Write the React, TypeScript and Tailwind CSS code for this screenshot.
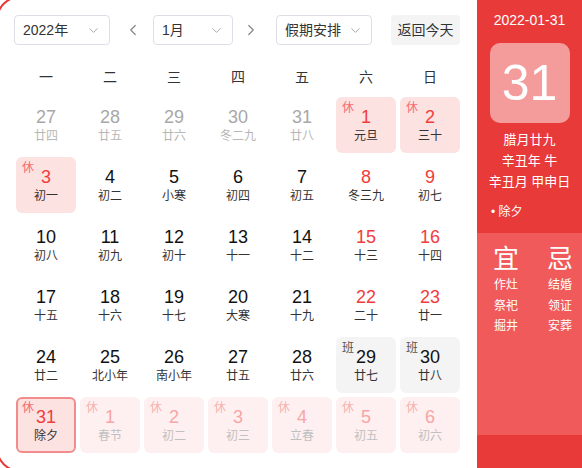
import { ChevronDown, ChevronLeft, ChevronRight } from "lucide-react";

type Day = {
  n: number;
  lunar: string;
  kind?: "prev" | "next";
  tag?: "休" | "班";
  red?: boolean;
  selected?: boolean;
};

const weeks: Day[][] = [
  [
    { n: 27, lunar: "廿四", kind: "prev" },
    { n: 28, lunar: "廿五", kind: "prev" },
    { n: 29, lunar: "廿六", kind: "prev" },
    { n: 30, lunar: "冬二九", kind: "prev" },
    { n: 31, lunar: "廿八", kind: "prev" },
    { n: 1, lunar: "元旦", tag: "休", red: true },
    { n: 2, lunar: "三十", tag: "休", red: true },
  ],
  [
    { n: 3, lunar: "初一", tag: "休", red: true },
    { n: 4, lunar: "初二" },
    { n: 5, lunar: "小寒" },
    { n: 6, lunar: "初四" },
    { n: 7, lunar: "初五" },
    { n: 8, lunar: "冬三九", red: true },
    { n: 9, lunar: "初七", red: true },
  ],
  [
    { n: 10, lunar: "初八" },
    { n: 11, lunar: "初九" },
    { n: 12, lunar: "初十" },
    { n: 13, lunar: "十一" },
    { n: 14, lunar: "十二" },
    { n: 15, lunar: "十三", red: true },
    { n: 16, lunar: "十四", red: true },
  ],
  [
    { n: 17, lunar: "十五" },
    { n: 18, lunar: "十六" },
    { n: 19, lunar: "十七" },
    { n: 20, lunar: "大寒" },
    { n: 21, lunar: "十九" },
    { n: 22, lunar: "二十", red: true },
    { n: 23, lunar: "廿一", red: true },
  ],
  [
    { n: 24, lunar: "廿二" },
    { n: 25, lunar: "北小年" },
    { n: 26, lunar: "南小年" },
    { n: 27, lunar: "廿五" },
    { n: 28, lunar: "廿六" },
    { n: 29, lunar: "廿七", tag: "班" },
    { n: 30, lunar: "廿八", tag: "班" },
  ],
  [
    { n: 31, lunar: "除夕", tag: "休", red: true, selected: true },
    { n: 1, lunar: "春节", tag: "休", kind: "next" },
    { n: 2, lunar: "初二", tag: "休", kind: "next" },
    { n: 3, lunar: "初三", tag: "休", kind: "next" },
    { n: 4, lunar: "立春", tag: "休", kind: "next" },
    { n: 5, lunar: "初五", tag: "休", kind: "next" },
    { n: 6, lunar: "初六", tag: "休", kind: "next" },
  ],
];

function Select({ label, width }: { label: string; width: string }) {
  return (
    <div
      className={`${width} h-[30px] flex items-center justify-between rounded-[4px] border border-[#dcdfe6] bg-white pl-[8px] pr-[8px] text-[14px] text-[#333]`}
    >
      <span>{label}</span>
      <ChevronDown size={15} strokeWidth={1.6} className="text-[#a8abb2]" />
    </div>
  );
}

function Cell({ d }: { d: Day }) {
  let box = "bg-white";
  let num = "text-[#111]";
  let sub = "text-[#333]";
  let tag = "text-[#f56c6c]";

  if (d.kind === "prev") {
    num = "text-[#a8a8a8]";
    sub = "text-[#b8b8b8]";
  } else if (d.kind === "next") {
    box = "bg-[#fef0f0]";
    num = "text-[#f8a5a5]";
    sub = "text-[#c0c0c0]";
    tag = "text-[#f8b0b0]";
  } else if (d.tag === "休") {
    box = "bg-[#fde2e2]";
    num = "text-[#f23c3c]";
  } else if (d.tag === "班") {
    box = "bg-[#f4f4f5]";
    tag = "text-[#555]";
  } else if (d.red) {
    num = "text-[#f23c3c]";
  }

  return (
    <div
      className={`relative h-[56px] rounded-[6px] flex flex-col items-center justify-center ${box} ${
        d.selected ? "border-2 border-[#f28b8b]" : ""
      }`}
    >
      {d.tag && (
        <span
          className={`absolute ${d.selected ? "left-[4px] top-[1px]" : "left-[6px] top-[3px]"} text-[12px] leading-[16px] ${tag}`}
        >
          {d.tag}
        </span>
      )}
      <span className={`text-[18px] leading-[22px] ${num}`}>{d.n}</span>
      <span className={`text-[12px] leading-[16px] ${sub}`}>{d.lunar}</span>
    </div>
  );
}

export default function App() {
  return (
    <div
      className="relative w-[582px] h-[468px] overflow-hidden bg-white flex"
      style={{ fontFamily: '"Liberation Sans", "Noto Sans CJK SC", sans-serif' }}
    >
      {/* Calendar */}
      <div className="w-[477px] shrink-0 flex flex-col">
        <div className="pt-[15px] pl-[14px] flex items-center h-[45px]">
          <Select label="2022年" width="w-[96px]" />
          <ChevronLeft size={18} strokeWidth={1.6} className="ml-[14px] text-[#888]" />
          <div className="ml-[11px]">
            <Select label="1月" width="w-[80px]" />
          </div>
          <ChevronRight size={18} strokeWidth={1.6} className="ml-[9px] text-[#888]" />
          <div className="ml-[16px]">
            <Select label="假期安排" width="w-[96px]" />
          </div>
          <button className="ml-[19px] h-[30px] w-[69px] rounded-[4px] bg-[#f4f4f5] text-[14px] text-[#333]">
            返回今天
          </button>
        </div>

        <div className="mt-[16px] pl-[16px] w-[460px] grid grid-cols-7 gap-x-[4px] h-[32px] items-center text-[14px] text-[#333]">
          {["一", "二", "三", "四", "五", "六", "日"].map((w) => (
            <div key={w} className="text-center">
              {w}
            </div>
          ))}
        </div>

        <div className="mt-[4px] pl-[16px] w-[460px] grid grid-cols-7 gap-[4px]">
          {weeks.flat().map((d, i) => (
            <Cell key={i} d={d} />
          ))}
        </div>
      </div>

      {/* Side panel */}
      <div className="flex-1 bg-[#e93a3a] text-white flex flex-col">
        <div className="pt-[11px] text-center text-[14px] leading-[18px]">2022-01-31</div>
        <div className="mx-auto mt-[14px] w-[80px] h-[80px] rounded-[10px] bg-[#f49c9c] flex items-center justify-center text-[50px] leading-none">
          31
        </div>
        <div className="mt-[6px] text-center text-[13px] leading-[21px]">
          <div>腊月廿九</div>
          <div>辛丑年 牛</div>
          <div>辛丑月 甲申日</div>
        </div>
        <div className="mt-[12px] pl-[14px] text-[12px] leading-[16px]">• 除夕</div>

        <div className="mt-[13px] h-[202px] bg-[#f05a5a] pl-[16px] pr-[9px] pt-[11px] flex justify-between">
          <div className="flex flex-col items-center">
            <span className="text-[26px] leading-[30px]">宜</span>
            <span className="mt-[1px] text-[12px] leading-[20.5px]">作灶</span>
            <span className="text-[12px] leading-[20.5px]">祭祀</span>
            <span className="text-[12px] leading-[20.5px]">掘井</span>
          </div>
          <div className="flex flex-col items-center">
            <span className="text-[26px] leading-[30px]">忌</span>
            <span className="mt-[1px] text-[12px] leading-[20.5px]">结婚</span>
            <span className="text-[12px] leading-[20.5px]">领证</span>
            <span className="text-[12px] leading-[20.5px]">安葬</span>
          </div>
        </div>
      </div>

      {/* Outer rounded frame, only its corners reach the view */}
      <div className="pointer-events-none absolute -left-[4px] -top-[4px] -right-[4px] -bottom-[4px] rounded-[24px] border-2 border-[#e93a3a]" />
    </div>
  );
}
